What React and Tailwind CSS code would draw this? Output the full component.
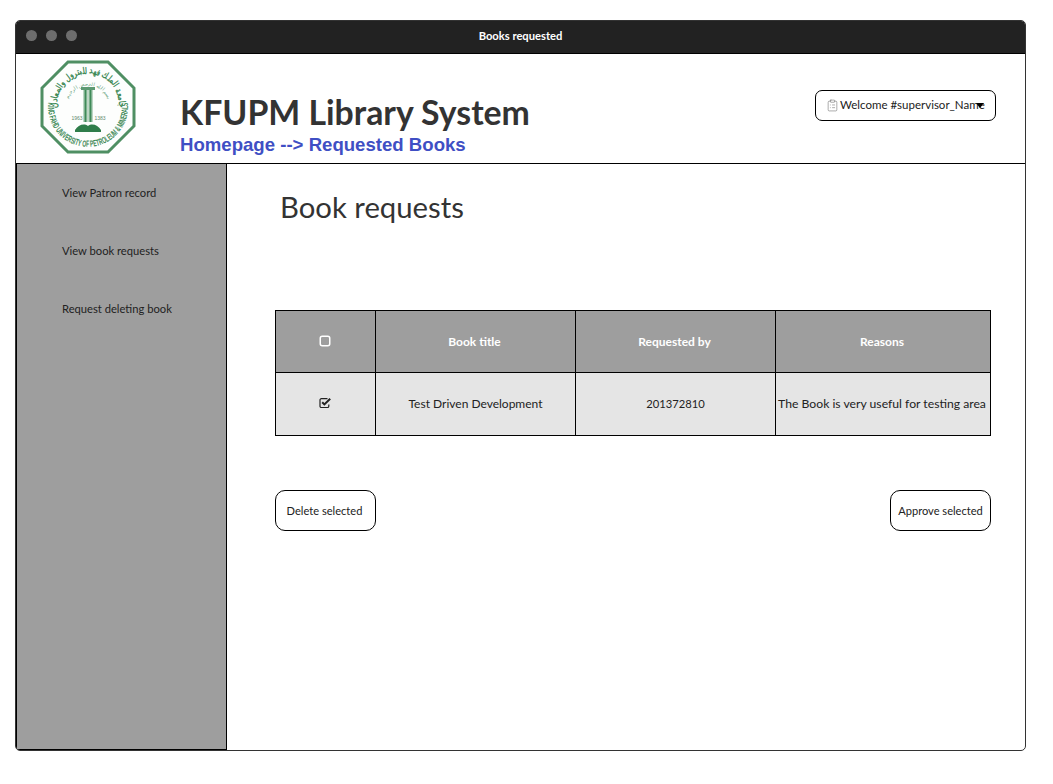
import React from "react";
import { ClipboardList } from "lucide-react";

const sidebarLinks = ["View Patron record", "View book requests", "Request deleting book"];

function Logo() {
    return (
        <svg width="96" height="94" viewBox="0 0 96 94" className="shrink-0">
            <polygon points="28,2 68,2 94,28 94,66 68,92 28,92 2,66 2,28" fill="#fdfefd" stroke="#4f8f63" strokeWidth="3" />
            <defs>
                <path id="logoTop" d="M17.5 50 A31 31 0 1 1 78.5 50" />
                <path id="logoBottom" d="M8.6 40 A40 40 0 1 0 87.4 40" />
                <path id="logoInner" d="M28 40 A21 21 0 0 1 68 40" />
            </defs>
            <text fontSize="9" fill="#3f8a58" fontFamily="'Noto Sans', sans-serif" fontWeight="700" textAnchor="middle">
                <textPath href="#logoTop" startOffset="50%" textLength="104" lengthAdjust="spacingAndGlyphs">جامعة الملك فهد للبترول والمعادن</textPath>
            </text>
            <text fontSize="9" fill="#3f8a58" fontFamily="'Liberation Sans', sans-serif" fontWeight="700" textAnchor="middle">
                <textPath href="#logoBottom" startOffset="50%" textLength="134" lengthAdjust="spacingAndGlyphs">KING FAHD UNIVERSITY OF PETROLEUM &amp; MINERALS</textPath>
            </text>
            <text fontSize="5" fill="#6ba57f" fontFamily="'Noto Sans', sans-serif" textAnchor="middle">
                <textPath href="#logoInner" startOffset="50%">بسم الله الرحمن الرحيم</textPath>
            </text>
            <rect x="41" y="27" width="14" height="3" fill="#5d9a72" />
            <rect x="43" y="30" width="10" height="32" fill="#bcd6c4" />
            <rect x="44.5" y="30" width="2" height="32" fill="#3f8a58" />
            <rect x="49.5" y="30" width="2" height="32" fill="#3f8a58" />
            <text x="37" y="60" fontSize="5" fill="#5d8a6c" fontFamily="'Liberation Sans', sans-serif" textAnchor="middle">1963</text>
            <text x="60" y="60" fontSize="5" fill="#5d8a6c" fontFamily="'Liberation Sans', sans-serif" textAnchor="middle">1383</text>
            <path d="M35 70 C38 65 44 63 48 66 C52 63 58 65 61 70 L61 72 L35 72 Z" fill="#2f7d4a" />
        </svg>
    );
}

function CheckOff() {
    return (
        <svg width="12" height="12" viewBox="0 0 12 12" className="-mt-[2px] -ml-[2px]">
            <rect x="1.25" y="1.25" width="9.5" height="9.5" rx="2" fill="none" stroke="white" strokeWidth="1.5" />
        </svg>
    );
}

function CheckOn() {
    return (
        <svg width="13" height="12" viewBox="0 0 13 12" className="-mt-[2px]">
            <path d="M9.8 7.5 V9.2 A1.3 1.3 0 0 1 8.5 10.5 H2.3 A1.3 1.3 0 0 1 1 9.2 V3 A1.3 1.3 0 0 1 2.3 1.7 H8.5" fill="none" stroke="#222" strokeWidth="1.2" />
            <path d="M3.2 5.2 L5.4 7.4 L11.2 1.8" fill="none" stroke="#222" strokeWidth="2" />
        </svg>
    );
}

export default function App() {
    return (
        <div className="pt-5 pl-[15px] bg-white h-[784px] font-['Lato',sans-serif] text-[#333]">
            <div className="w-[1011px] h-[731px] rounded-[5px] border border-[#333] overflow-hidden flex flex-col">
                {/* title bar */}
                <div className="h-[33px] shrink-0 bg-[#222] border-b border-black relative flex items-center justify-center">
                    <div className="absolute left-[10px] top-[9px] flex gap-[9px]">
                        <span className="w-[11px] h-[11px] rounded-full bg-[#6e6e6e]"></span>
                        <span className="w-[11px] h-[11px] rounded-full bg-[#6e6e6e]"></span>
                        <span className="w-[11px] h-[11px] rounded-full bg-[#6e6e6e]"></span>
                    </div>
                    <p className="text-[11.2px] leading-[16px] -mt-[2px] font-bold text-white">Books requested</p>
                </div>

                {/* header */}
                <div className="h-[110px] shrink-0 border-b border-black flex relative">
                    <div className="pl-[24px] pt-[6px] w-[164px] shrink-0">
                        <Logo />
                    </div>
                    <div className="pt-[37px]">
                        <h1 className="text-[33.8px] leading-[42px] font-bold text-[#333]">KFUPM Library System</h1>
                        <p className="font-['Liberation_Sans',sans-serif] font-bold text-[18.6px] leading-[24px] text-[#3f4fc4]">Homepage --&gt; Requested Books</p>
                    </div>
                    <div className="ml-auto mr-[29px] mt-[36px] w-[181px] h-[31px] rounded-[7px] border border-black flex items-center pl-[10px] text-[11.5px] text-[#222] relative">
                        <ClipboardList size={13} strokeWidth={1} className="text-[#666] mr-[1px] shrink-0" />
                        <span className="whitespace-nowrap -mt-[2px]">Welcome #supervisor_Name</span>
                        <span className="absolute left-[160px] top-[12px] w-0 h-0 border-x-[4px] border-x-transparent border-t-[5px] border-t-black"></span>
                    </div>
                </div>

                {/* body */}
                <div className="flex-1 flex min-h-0">
                    <aside className="w-[211px] shrink-0 bg-[#9e9e9e] border-r border-b border-l border-black pl-[45px] pt-[20px] flex flex-col gap-[41px]">
                        {sidebarLinks.map((link) => (
                            <p key={link} className="text-[11.2px] leading-[17px] text-[#222]">{link}</p>
                        ))}
                    </aside>

                    <main className="flex-1 pl-[48px]">
                        <h2 className="text-[29.3px] leading-[38px] pl-[5px] pt-[24px] text-[#333]">Book requests</h2>

                        <div className="mt-[84px] w-[716px] border border-black text-[12px]">
                            <div className="grid grid-cols-[100px_200px_200px_214px] h-[61px] bg-[#9e9e9e] text-white font-bold">
                                <div className="flex items-center justify-center border-r border-black"><CheckOff /></div>
                                <div className="flex items-center justify-center border-r border-black pr-[2px]">Book title</div>
                                <div className="flex items-center justify-center border-r border-black pr-[2px]">Requested by</div>
                                <div className="flex items-center justify-center pr-[2px]">Reasons</div>
                            </div>
                            <div className="grid grid-cols-[100px_200px_200px_214px] h-[63px] bg-[#e5e5e5] border-t border-black text-[#222]">
                                <div className="flex items-center justify-center border-r border-black"><CheckOn /></div>
                                <div className="flex items-center justify-center border-r border-black">Test Driven Development</div>
                                <div className="flex items-center justify-center border-r border-black text-[11.2px]">201372810</div>
                                <div className="flex items-center justify-center whitespace-nowrap pr-[2px] text-[12.2px]">The Book is very useful for testing area</div>
                            </div>
                        </div>

                        <div className="mt-[54px] w-[716px] flex justify-between">
                            <button className="w-[101px] h-[41px] pt-[1px] pr-[2px] rounded-[10px] border border-black text-[11.1px] text-[#222]">Delete selected</button>
                            <button className="w-[101px] h-[41px] pt-[1px] rounded-[10px] border border-black text-[11.1px] text-[#222]">Approve selected</button>
                        </div>
                    </main>
                </div>
            </div>
        </div>
    );
}
